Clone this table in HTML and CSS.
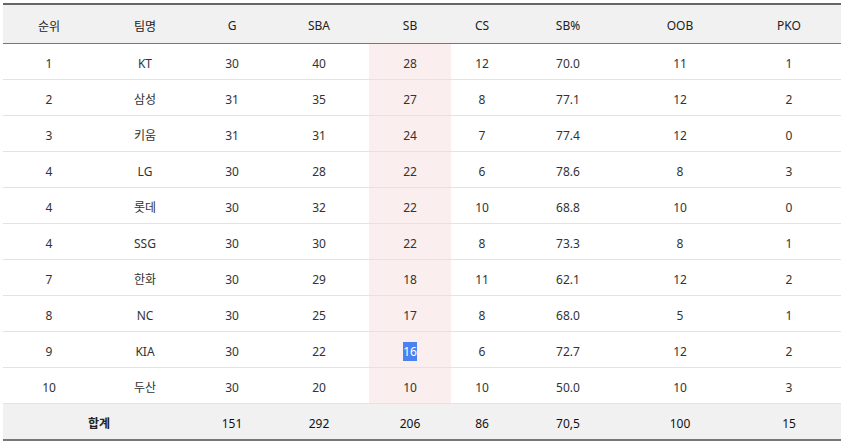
FILE: index.html
```html
<!DOCTYPE html>
<html lang="ko">
<head>
<meta charset="utf-8">
<link rel="stylesheet" href="styles.css">
</head>
<body>
<div class="wrap">
<table class="stats">
<colgroup>
<col class="c1"><col class="c2"><col class="c3"><col class="c4"><col class="c5"><col class="c6"><col class="c7"><col class="c8"><col class="c9">
</colgroup>
<thead>
<tr><th>순위</th><th>팀명</th><th>G</th><th>SBA</th><th>SB</th><th>CS</th><th>SB%</th><th>OOB</th><th>PKO</th></tr>
</thead>
<tbody>
<tr><td>1</td><td>KT</td><td>30</td><td>40</td><td class="hl">28</td><td>12</td><td>70.0</td><td>11</td><td>1</td></tr>
<tr><td>2</td><td>삼성</td><td>31</td><td>35</td><td class="hl">27</td><td>8</td><td>77.1</td><td>12</td><td>2</td></tr>
<tr><td>3</td><td>키움</td><td>31</td><td>31</td><td class="hl">24</td><td>7</td><td>77.4</td><td>12</td><td>0</td></tr>
<tr><td>4</td><td>LG</td><td>30</td><td>28</td><td class="hl">22</td><td>6</td><td>78.6</td><td>8</td><td>3</td></tr>
<tr><td>4</td><td>롯데</td><td>30</td><td>32</td><td class="hl">22</td><td>10</td><td>68.8</td><td>10</td><td>0</td></tr>
<tr><td>4</td><td>SSG</td><td>30</td><td>30</td><td class="hl">22</td><td>8</td><td>73.3</td><td>8</td><td>1</td></tr>
<tr><td>7</td><td>한화</td><td>30</td><td>29</td><td class="hl">18</td><td>11</td><td>62.1</td><td>12</td><td>2</td></tr>
<tr><td>8</td><td>NC</td><td>30</td><td>25</td><td class="hl">17</td><td>8</td><td>68.0</td><td>5</td><td>1</td></tr>
<tr><td>9</td><td>KIA</td><td>30</td><td>22</td><td class="hl"><span class="sel">16</span></td><td>6</td><td>72.7</td><td>12</td><td>2</td></tr>
<tr><td>10</td><td>두산</td><td>30</td><td>20</td><td class="hl">10</td><td>10</td><td>50.0</td><td>10</td><td>3</td></tr>
</tbody>
<tfoot>
<tr><th colspan="2">합계</th><td>151</td><td>292</td><td>206</td><td>86</td><td>70,5</td><td>100</td><td>15</td></tr>
</tfoot>
</table>
</div>
</body>
</html>
```
FILE: styles.css
```css
html, body {
  margin: 0;
  padding: 0;
  background: #ffffff;
}
.wrap {
  padding: 3px 3px 0 3px;
}
.stats {
  width: 838px;
  border-collapse: collapse;
  table-layout: fixed;
  font-family: "Noto Sans", "Noto Sans CJK KR", sans-serif;
  font-size: 12px;
  color: #333333;
  text-align: center;
}
.c1 { width: 92px; }
.c2 { width: 100px; }
.c3 { width: 74px; }
.c4 { width: 100px; }
.c5 { width: 82px; }
.c6 { width: 62px; }
.c7 { width: 110px; }
.c8 { width: 114px; }
.c9 { width: 104px; }
.stats th, .stats td {
  padding: 3px 0 0 0;
  text-align: center;
}
.stats thead th {
  height: 35px;
  background: #f1f1f1;
  color: #222222;
  font-weight: normal;
  border-top: 2px solid #666666;
  border-bottom: 1px solid #777777;
}
.stats tbody td {
  height: 32px;
  border-bottom: 1px solid #e3e3e3;
}
.stats tbody td.hl {
  background: #fbeeee;
}
.sel {
  background: #4a82f2;
  color: #ffffff;
  padding: 1px 0;
}
.stats tfoot th, .stats tfoot td {
  height: 32px;
  background: #f1f1f1;
  color: #222222;
  font-weight: bold;
  border-bottom: 2px solid #777777;
}
.stats tfoot td {
  font-weight: normal;
  color: #111111;
}
```
